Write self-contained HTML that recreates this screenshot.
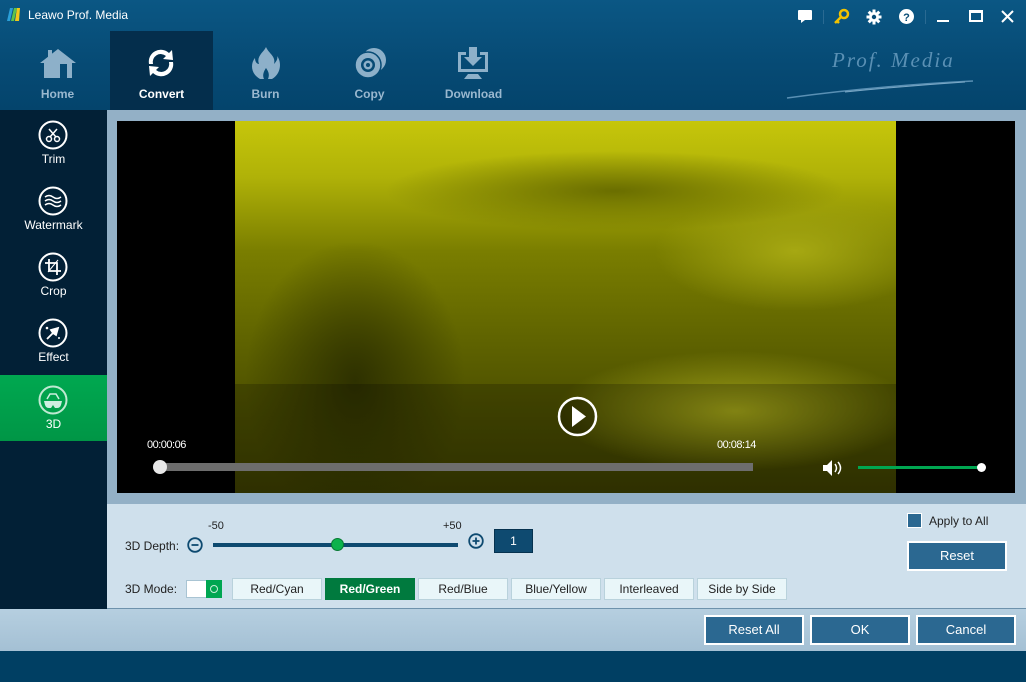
<!DOCTYPE html>
<html><head><meta charset="utf-8"><style>
*{box-sizing:border-box;margin:0;padding:0}
body{width:1026px;height:682px;overflow:hidden;font-family:"Liberation Sans",sans-serif;background:#003f63;position:relative;font-size:12px}
.a{position:absolute}
.top{left:0;top:0;width:1026px;height:110px;background:linear-gradient(#0b5784,#064a74 60%,#04446c)}
.nav{top:31px;height:79px;width:103px;text-align:center;color:#9ab8cf;font-weight:bold;font-size:12px}
.nav span{position:absolute;left:0;right:0;top:56px}
.side{left:0;top:110px;width:107px;height:499px;background:#022036}
.si{left:0;width:107px;height:66px;text-align:center;color:#fff;font-size:12px}
.si span{position:absolute;left:0;right:0;top:42px}
.si svg{position:absolute;left:38px;top:10px}
.btn{background:#e9f6f9;border:1px solid #b9d2dc;color:#222;text-align:center;line-height:20px;height:22px;top:578px;font-size:12px}
.bb{background:#2b6891;border:2px solid #fff;color:#fff;text-align:center;font-size:13px;line-height:26px;height:30px}
</style></head><body>
<div class="a top"></div>
<svg class="a" style="left:5px;top:7px" width="16" height="15"><polygon points="2,14 5,1 8,1 5,14" fill="#2a9fd8"/><polygon points="6,14 9,1 12,1 9,14" fill="#5cc24a"/><polygon points="10,14 12,1 15,1 14,14" fill="#f2c81a"/></svg>
<div class="a" style="left:28px;top:8px;color:#fff;font-size:12px">Leawo Prof. Media</div>
<svg class="a" style="left:797px;top:9px" width="16" height="15"><path d="M2 1h12a1 1 0 0 1 1 1v8a1 1 0 0 1-1 1H8l-4 3v-3H2a1 1 0 0 1-1-1V2a1 1 0 0 1 1-1z" fill="#fff"/></svg>
<div class="a" style="left:823px;top:10px;width:1px;height:14px;background:#2a6a92"></div>
<svg class="a" style="left:833px;top:8px" width="17" height="17"><circle cx="11" cy="6" r="4" fill="none" stroke="#f2c200" stroke-width="2.5"/><path d="M8 9l-6 6M4 13l2 2" stroke="#f2c200" stroke-width="2.5"/></svg>
<svg class="a" style="left:866px;top:9px" width="16" height="16" viewBox="0 0 16 16"><g fill="#fff"><circle cx="8" cy="8" r="5"/><rect x="6.5" y="0.5" width="3" height="15"/><rect x="0.5" y="6.5" width="15" height="3"/><rect x="6.5" y="0.5" width="3" height="15" transform="rotate(45 8 8)"/><rect x="6.5" y="0.5" width="3" height="15" transform="rotate(-45 8 8)"/></g><circle cx="8" cy="8" r="2.2" fill="#064a74"/></svg>
<svg class="a" style="left:899px;top:9px" width="15" height="15"><circle cx="7.5" cy="7.5" r="7.5" fill="#fff"/><text x="7.5" y="12" text-anchor="middle" font-size="11" font-weight="bold" fill="#064a74" font-family="Liberation Sans">?</text></svg>
<div class="a" style="left:925px;top:10px;width:1px;height:14px;background:#2a6a92"></div>
<div class="a" style="left:937px;top:20px;width:12px;height:2px;background:#fff"></div>
<div class="a" style="left:969px;top:10px;width:14px;height:12px;border:2px solid #fff;border-top-width:3px"></div>
<svg class="a" style="left:1001px;top:10px" width="13" height="13"><path d="M1 1L12 12M12 1L1 12" stroke="#fff" stroke-width="2"/></svg>
<div class="a" style="left:832px;top:48px;color:#5a90b4;font-family:'Liberation Serif',serif;font-style:italic;font-size:21px;letter-spacing:2px">Prof. Media</div>
<svg class="a" style="left:785px;top:78px" width="190" height="22"><path d="M2 20Q90 8 188 3" stroke="#5a90b4" stroke-width="1.5" fill="none"/><path d="M60 14Q120 8 180 4" stroke="#7aa8c6" stroke-width="1" fill="none"/></svg>
<div class="a nav" style="left:110px;background:#042e4c;color:#fff"></div>
<div class="a nav" style="left:6px"><svg style="position:absolute;left:32px;top:16px" width="40" height="32"><path d="M2 16L20 2L38 16L34 16L34 31L6 31L6 16Z" fill="#8db0c9"/><rect x="10" y="3" width="4" height="7" fill="#8db0c9"/><rect x="22" y="17" width="7" height="14" fill="#064a74"/></svg><span>Home</span></div>
<div class="a nav" style="left:110px;color:#fff"><svg style="position:absolute;left:35px;top:15px" width="32" height="34" viewBox="0 0 32 34"><path d="M4 18A12 12 0 0 1 24 7L27 4L28 14L18 13L21 10A8 8 0 0 0 8 18Z" fill="#fff"/><path d="M28 16A12 12 0 0 1 8 27L5 30L4 20L14 21L11 24A8 8 0 0 0 24 16Z" fill="#fff"/></svg><span>Convert</span></div>
<div class="a nav" style="left:214px"><svg style="position:absolute;left:36px;top:15px" width="32" height="34"><path d="M16 1C19 8 26 10 24 18C27 15 28 12 27 10C32 16 31 28 22 33L10 33C1 28 0 18 5 12C5 16 7 18 9 18C6 10 14 6 16 1Z" fill="#8db0c9"/><path d="M16 22C18 25 20 28 18 33L14 33C12 29 14 25 16 22Z" fill="#064a74"/></svg><span>Burn</span></div>
<div class="a nav" style="left:318px"><svg style="position:absolute;left:35px;top:15px" width="34" height="34"><circle cx="21" cy="14" r="12" fill="#8db0c9"/><circle cx="15" cy="19" r="13" fill="#8db0c9" stroke="#064a74" stroke-width="1.5"/><circle cx="15" cy="19" r="7" fill="#064a74"/><circle cx="15" cy="19" r="4.5" fill="#8db0c9"/><circle cx="15" cy="19" r="2" fill="#064a74"/></svg><span>Copy</span></div>
<div class="a nav" style="left:422px"><svg style="position:absolute;left:34px;top:15px" width="34" height="34"><path d="M2 6h8v3H5v14h24V9h-5V6h8v20H2Z" fill="#8db0c9"/><path d="M13 1h8v10h5l-9 9-9-9h5Z" fill="#8db0c9"/><path d="M8 33l4-5h10l4 5Z" fill="#8db0c9"/></svg><span>Download</span></div>
<div class="a" style="left:107px;top:110px;width:919px;height:394px;background:#93b0c6"></div>
<div class="a side"></div>
<div class="a si" style="top:110px"><svg width="30" height="30"><circle cx="15" cy="15" r="13.5" fill="none" stroke="#fff" stroke-width="2"/><circle cx="11" cy="19" r="2.5" fill="none" stroke="#fff" stroke-width="1.5"/><circle cx="19" cy="19" r="2.5" fill="none" stroke="#fff" stroke-width="1.5"/><path d="M12 17L19 9M18 17L11 9" stroke="#fff" stroke-width="1.5"/></svg><span>Trim</span></div>
<div class="a si" style="top:176px"><svg width="30" height="30"><circle cx="15" cy="15" r="13.5" fill="none" stroke="#fff" stroke-width="2"/><path d="M7 11q4-3 8 0t8 0M7 15q4-3 8 0t8 0M7 19q4-3 8 0t8 0" stroke="#fff" stroke-width="1.5" fill="none"/></svg><span>Watermark</span></div>
<div class="a si" style="top:242px"><svg width="30" height="30"><circle cx="15" cy="15" r="13.5" fill="none" stroke="#fff" stroke-width="2"/><path d="M11 7v12h12M7 11h12v12" stroke="#fff" stroke-width="1.8" fill="none"/><path d="M20 8L10 20" stroke="#fff" stroke-width="1"/></svg><span>Crop</span></div>
<div class="a si" style="top:308px"><svg width="30" height="30"><circle cx="15" cy="15" r="13.5" fill="none" stroke="#fff" stroke-width="2"/><path d="M9 21L16 14M13 12l7-2-2 7-3-2Z" stroke="#fff" stroke-width="1.8" fill="#fff"/><circle cx="9" cy="10" r="1.3" fill="#fff"/><circle cx="21" cy="20" r="1" fill="#fff"/></svg><span>Effect</span></div>
<div class="a si" style="top:375px;height:66px;background:linear-gradient(#00a850,#009646)"><svg width="30" height="30"><circle cx="15" cy="15" r="13.5" fill="none" stroke="#bfe9d2" stroke-width="2"/><path d="M6 16h18l-1 4q-1 3-4 3h-2l-2-3-2 3h-2q-3 0-4-3Z" fill="#cdeee0"/><path d="M9 14l3-5h6l3 5" stroke="#cdeee0" stroke-width="1.5" fill="none"/></svg><span>3D</span></div>
<div class="a" style="left:117px;top:121px;width:898px;height:372px;background:#000"></div>
<div class="a" style="left:235px;top:121px;width:661px;height:372px;background:
radial-gradient(ellipse 110px 140px at 120px 260px,#2e3100 0%,transparent 100%),
radial-gradient(ellipse 230px 40px at 380px 70px,#6a6e00 0%,transparent 100%),
radial-gradient(ellipse 180px 60px at 500px 290px,#a2a418 0%,transparent 100%),
radial-gradient(ellipse 140px 60px at 560px 130px,#a6a812 0%,transparent 100%),
linear-gradient(180deg,#c6c60a 0%,#b0b208 15%,#7a7e00 35%,#5e6200 60%,#4a4d00 80%,#3a3c00 100%)"></div>
<div class="a" style="left:235px;top:384px;width:661px;height:109px;background:rgba(0,0,0,.2)"></div>
<svg class="a" style="left:557px;top:396px" width="41" height="41"><circle cx="20.5" cy="20.5" r="18.5" fill="rgba(0,0,0,.25)" stroke="#fff" stroke-width="2.5"/><path d="M15 10L29 20.5L15 31Z" fill="#fff"/></svg>
<div class="a" style="left:147px;top:439px;color:#fff;font-size:11px;letter-spacing:-.5px">00:00:06</div>
<div class="a" style="left:717px;top:439px;color:#fff;font-size:11px;letter-spacing:-.5px">00:08:14</div>
<div class="a" style="left:156px;top:463px;width:597px;height:8px;background:#6d6d6d"></div>
<div class="a" style="left:153px;top:460px;width:14px;height:14px;border-radius:50%;background:#e8e8e8"></div>
<svg class="a" style="left:822px;top:459px" width="22" height="18"><path d="M1 6h4l5-5v16l-5-5H1Z" fill="#fff"/><path d="M13 5q3 4 0 8M16 3q5 6 0 12" stroke="#fff" stroke-width="1.5" fill="none"/></svg>
<div class="a" style="left:858px;top:466px;width:124px;height:3px;background:#00a651"></div>
<div class="a" style="left:977px;top:463px;width:9px;height:9px;border-radius:50%;background:#fff"></div>
<div class="a" style="left:107px;top:504px;width:919px;height:105px;background:#cfe0ec;border-bottom:1px solid #6e92ac"></div>
<div class="a" style="left:125px;top:539px;color:#222">3D Depth:</div>
<svg class="a" style="left:187px;top:537px" width="16" height="16"><circle cx="8" cy="8" r="6.8" fill="none" stroke="#0e4a70" stroke-width="1.8"/><path d="M4.5 8h7" stroke="#0e4a70" stroke-width="1.8"/></svg>
<div class="a" style="left:208px;top:520px;color:#222;font-size:11px">-50</div>
<div class="a" style="left:443px;top:520px;color:#222;font-size:11px">+50</div>
<div class="a" style="left:213px;top:543px;width:245px;height:4px;background:#0e4a70"></div>
<div class="a" style="left:331px;top:538px;width:13px;height:13px;border-radius:50%;background:#0cb24c;border:1px solid #087a34"></div>
<svg class="a" style="left:468px;top:533px" width="16" height="16"><circle cx="8" cy="8" r="6.8" fill="none" stroke="#0e4a70" stroke-width="1.8"/><path d="M4.5 8h7M8 4.5v7" stroke="#0e4a70" stroke-width="1.8"/></svg>
<div class="a" style="left:494px;top:529px;width:39px;height:24px;background:#0e4a70;border:1px solid #06324f;color:#fff;text-align:center;line-height:22px;font-size:12px">1</div>
<div class="a" style="left:125px;top:582px;color:#222">3D Mode:</div>
<div class="a" style="left:186px;top:580px;width:36px;height:18px;background:#fff;border:1px solid #a9c4d3"></div>
<div class="a" style="left:206px;top:580px;width:16px;height:18px;background:#00a651"></div>
<div class="a" style="left:210px;top:585px;width:8px;height:8px;border-radius:50%;border:1.5px solid #c8eed8"></div>
<div class="a btn" style="left:232px;width:90px">Red/Cyan</div>
<div class="a btn" style="left:325px;width:90px;background:#007a3e;border-color:#007a3e;color:#fff;font-weight:bold">Red/Green</div>
<div class="a btn" style="left:418px;width:90px">Red/Blue</div>
<div class="a btn" style="left:511px;width:90px">Blue/Yellow</div>
<div class="a btn" style="left:604px;width:90px">Interleaved</div>
<div class="a btn" style="left:697px;width:90px">Side by Side</div>
<div class="a" style="left:907px;top:513px;width:15px;height:15px;background:#2b6891;border:1px solid #fff"></div>
<div class="a" style="left:929px;top:514px;color:#222;font-size:12px">Apply to All</div>
<div class="a bb" style="left:907px;top:541px;width:100px">Reset</div>
<div class="a" style="left:0;top:609px;width:1026px;height:42px;background:linear-gradient(#b6cfe0,#a4c0d4)"></div>
<div class="a bb" style="left:704px;top:615px;width:100px">Reset All</div>
<div class="a bb" style="left:810px;top:615px;width:100px">OK</div>
<div class="a bb" style="left:916px;top:615px;width:100px">Cancel</div>
</body></html>
